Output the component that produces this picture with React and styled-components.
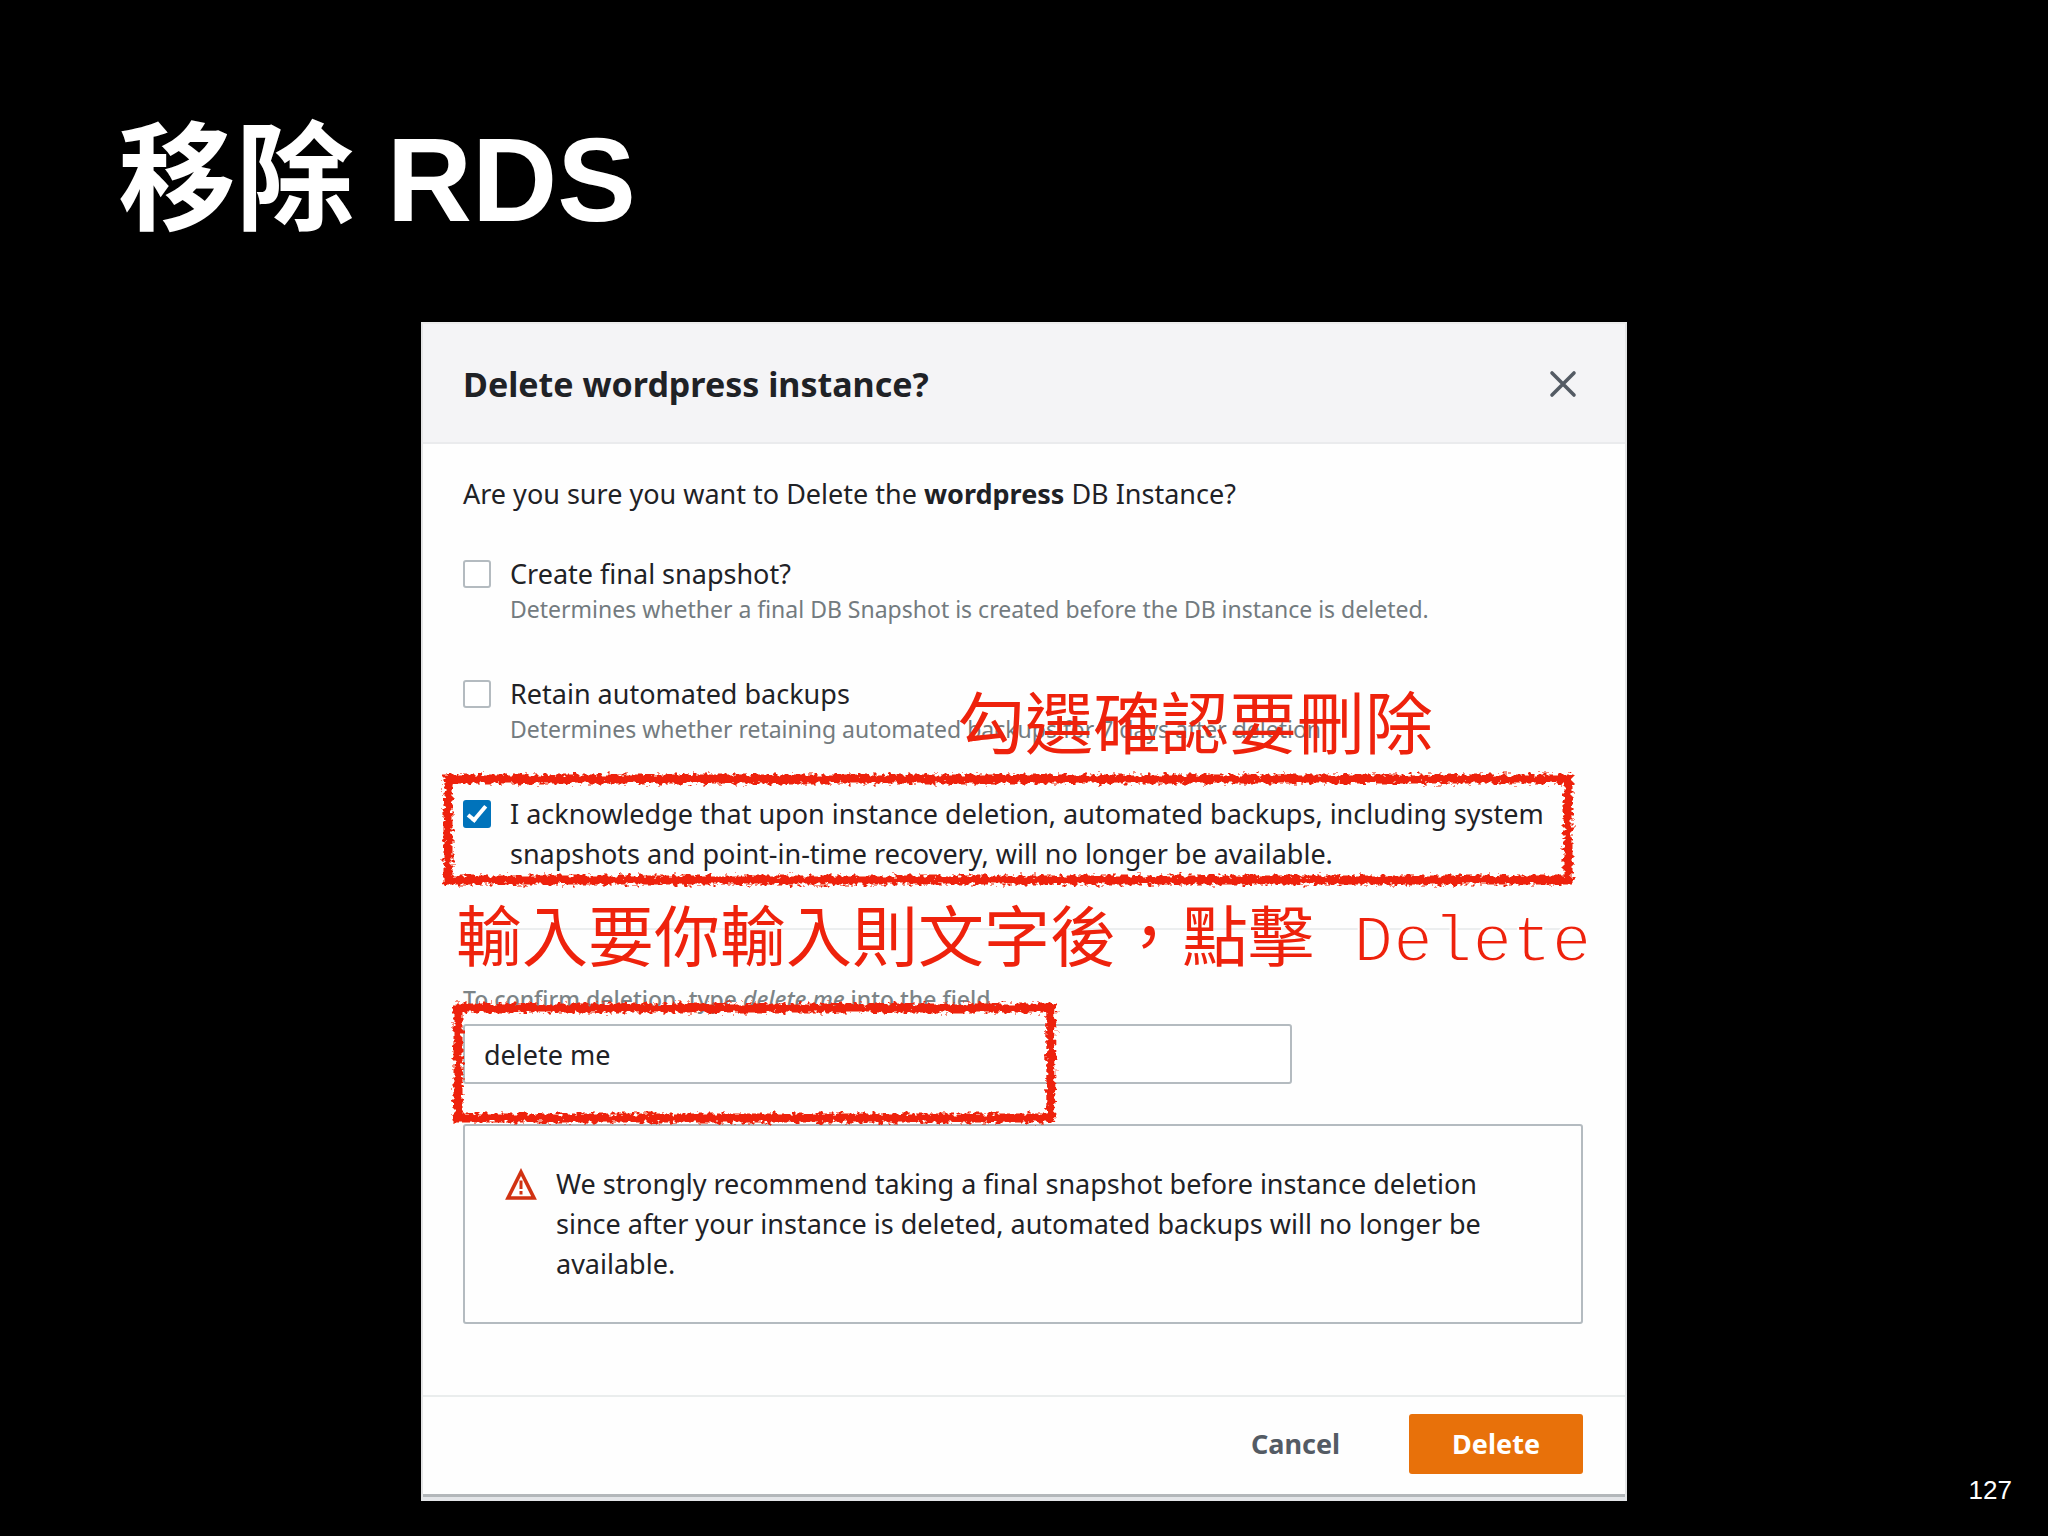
import React, { useId } from "react";
import styled, { createGlobalStyle } from "styled-components";

const GlobalStyle = createGlobalStyle`
  *, *::before, *::after { box-sizing: border-box; }
  body {
    margin: 0;
    background: #000;
    color: #1f2226;
    font-family: "Noto Sans", "Open Sans", "Noto Sans CJK TC", sans-serif;
    font-size: 27px;
    line-height: 40px;
  }
`;

const Slide = styled.main`
  display: flex;
  flex-direction: column;
  gap: 72px;
  min-height: 100vh;
  padding: 110px 0 34px;
  background: #000;
`;

const SlideTitle = styled.h1`
  margin: 0;
  padding: 0 118px;
  color: #fff;
  font-family: "Liberation Sans", "Noto Sans CJK TC", sans-serif;
  font-size: 118px;
  font-weight: 700;
  line-height: 140px;
`;

const Stage = styled.div`
  display: grid;
  grid-template-columns: 1fr minmax(0, 1206px) 1fr;
  flex: 1;
`;

const PageNumber = styled.span`
  grid-column: 3;
  align-self: end;
  justify-self: end;
  padding-right: 36px;
  color: #fff;
  font-family: "Liberation Sans", sans-serif;
  font-size: 26px;
  line-height: 24px;
`;

const Dialog = styled.section`
  grid-column: 2;
  align-self: start;
  border: 2px solid #e4e5e6;
  border-top-color: #ececec;
  border-bottom: 4px solid #e3e5e8;
  background: #fefefe;
`;

const DialogHeader = styled.header`
  display: flex;
  align-items: center;
  justify-content: space-between;
  padding: 40px 42px 38px 40px;
  border-bottom: 2px solid #eaebed;
  background: #f4f4f6;
`;

const DialogTitle = styled.h2`
  margin: 0;
  font-size: 34px;
  font-weight: 700;
  line-height: 40px;
`;

const CloseButton = styled.button`
  display: flex;
  padding: 6px;
  border: 0;
  background: none;
  color: #545b64;
`;

const DialogBody = styled.div`
  padding: 30px 42px 71px 40px;
`;

const Question = styled.p`
  margin: 0 0 40px;
`;

const Option = styled.div`
  position: relative;
  display: grid;
  grid-template-columns: 28px 1fr;
  column-gap: 19px;
  margin-bottom: ${(p) => (p.$last ? 54 : 50)}px;
`;

const Checkbox = styled.input`
  appearance: none;
  display: grid;
  place-items: center;
  width: 28px;
  height: 28px;
  margin: 6px 0;
  border: 2px solid #b4bbc0;
  border-radius: 3px;
  background: #fff;

  &:checked {
    border-color: #0073bb;
    background: #0073bb;
  }

  &:checked::after {
    content: "";
    width: 10px;
    height: 20px;
    margin-bottom: 4px;
    border: solid #fff;
    border-width: 0 4px 4px 0;
    rotate: 40deg;
  }
`;

const OptionLabel = styled.label`
  display: block;
`;

const Hint = styled.p`
  grid-column: 2;
  margin: 0;
  color: #737b7f;
  font-size: 23px;
  line-height: 30px;
`;

const Divider = styled.div`
  position: relative;
  height: 2px;
  margin-bottom: 54px;
  background: #eceeef;
`;

const FieldLabel = styled.label`
  display: block;
  margin-bottom: 10px;
  color: #7c8487;
  font-size: 23px;
  font-weight: 500;
  line-height: 30px;
`;

const Field = styled.div`
  position: relative;
  width: 74%;
  margin-bottom: 40px;
`;

const TextInput = styled.input`
  display: block;
  width: 100%;
  height: 60px;
  padding: 0 19px;
  border: 2px solid #b4bbc0;
  border-radius: 3px;
  background: #fff;
  color: #1f2226;
  font: inherit;
`;

const Warning = styled.div`
  display: flex;
  gap: 19px;
  padding: 38px 90px 38px 40px;
  border: 2px solid #b4bbc0;
  border-radius: 3px;

  p { margin: 0; }
  svg { flex: none; margin-top: 4px; }
`;

const DialogFooter = styled.footer`
  display: flex;
  justify-content: flex-end;
  gap: 26px;
  padding: 17px 42px 20px 40px;
  border-top: 2px solid #eaeded;
  border-bottom: 3px solid #b3b7ba;
`;

const Button = styled.button`
  height: 60px;
  padding: 0 43px;
  border: 0;
  border-radius: 3px;
  background: ${(p) => (p.$primary ? "#e8710a" : "transparent")};
  color: ${(p) => (p.$primary ? "#fff" : "#545b64")};
  font: inherit;
  font-weight: 700;
`;

const Note = styled.div`
  position: absolute;
  z-index: 2;
  top: ${(p) => p.$top}px;
  left: ${(p) => p.$left};
  right: ${(p) => p.$right};
  color: #ee220c;
  font-family: "Noto Sans CJK TC", sans-serif;
  font-size: ${(p) => p.$size}px;
  line-height: 80px;
  white-space: nowrap;
`;

const Mono = styled.span`
  font-family: "Liberation Mono", monospace;
  white-space: pre;
  -webkit-text-stroke: 2px #fefefe;
`;

const SketchFrame = styled.div`
  position: absolute;
  z-index: 1;
  inset: ${(p) => p.$inset};
  pointer-events: none;

  svg {
    display: block;
    width: 100%;
    height: 100%;
    overflow: visible;
  }

  rect {
    width: calc(100% - 10px);
    height: calc(100% - 10px);
    fill: none;
    stroke: #ee220c;
    stroke-width: 9px;
  }
`;

function Sketch({ inset, seed }) {
  const id = useId();
  return (
    <SketchFrame $inset={inset} aria-hidden="true">
      <svg>
        <filter id={id} x="-5%" y="-15%" width="110%" height="130%">
          <feTurbulence type="fractalNoise" baseFrequency="0.2 0.26" numOctaves="2" seed={seed} />
          <feDisplacementMap in="SourceGraphic" scale="10" xChannelSelector="R" yChannelSelector="G" />
        </filter>
        <rect x="5" y="5" filter={`url(#${id})`} />
      </svg>
    </SketchFrame>
  );
}

function CloseIcon() {
  return (
    <svg width="28" height="28" viewBox="0 0 28 28" fill="none" stroke="currentColor" strokeWidth="3.6" strokeLinecap="round">
      <path d="M3 3l22 22M25 3L3 25" />
    </svg>
  );
}

function WarningIcon() {
  return (
    <svg width="32" height="32" viewBox="0 0 32 32" fill="none" stroke="#d13212" strokeWidth="3.6">
      <path d="M16 4L29 30H3z" strokeLinejoin="miter" />
      <path d="M16 12.5v8.5M16 23v3.4" strokeWidth="3" />
    </svg>
  );
}

export default function App() {
  return (
    <>
      <GlobalStyle />
      <Slide>
        <SlideTitle>移除 RDS</SlideTitle>
        <Stage>
          <Dialog role="dialog" aria-labelledby="dialog-title">
            <DialogHeader>
              <DialogTitle id="dialog-title">Delete wordpress instance?</DialogTitle>
              <CloseButton type="button" aria-label="Close">
                <CloseIcon />
              </CloseButton>
            </DialogHeader>
            <DialogBody>
              <Question>
                Are you sure you want to Delete the <strong>wordpress</strong> DB Instance?
              </Question>
              <Option>
                <Checkbox type="checkbox" id="final-snapshot" />
                <OptionLabel htmlFor="final-snapshot">Create final snapshot?</OptionLabel>
                <Hint>Determines whether a final DB Snapshot is created before the DB instance is deleted.</Hint>
              </Option>
              <Option>
                <Checkbox type="checkbox" id="retain-backups" />
                <OptionLabel htmlFor="retain-backups">Retain automated backups</OptionLabel>
                <Hint>Determines whether retaining automated backups for 7 days after deletion</Hint>
                <Note $top={6} $left="auto" $right="150px" $size={68}>勾選確認要刪除</Note>
              </Option>
              <Option $last>
                <Checkbox type="checkbox" id="acknowledge" defaultChecked />
                <OptionLabel htmlFor="acknowledge">
                  I acknowledge that upon instance deletion, automated backups, including system snapshots and
                  point-in-time recovery, will no longer be available.
                </OptionLabel>
                <Sketch inset="-20px 10px -11px -20px" seed={4} />
              </Option>
              <Divider>
                <Note $top={-36} $left="-7px" $right="auto" $size={66}>
                  輸入要你輸入則文字後，點擊<Mono> Delete</Mono>
                </Note>
              </Divider>
              <FieldLabel htmlFor="confirm">
                To confirm deletion, type <em>delete me</em> into the field.
              </FieldLabel>
              <Field>
                <TextInput id="confirm" type="text" defaultValue="delete me" spellCheck={false} />
                <Sketch inset="-21px 236px -39px -10px" seed={9} />
              </Field>
              <Warning>
                <WarningIcon />
                <p>
                  We strongly recommend taking a final snapshot before instance deletion since after your instance is
                  deleted, automated backups will no longer be available.
                </p>
              </Warning>
            </DialogBody>
            <DialogFooter>
              <Button type="button">Cancel</Button>
              <Button type="button" $primary>Delete</Button>
            </DialogFooter>
          </Dialog>
          <PageNumber>127</PageNumber>
        </Stage>
      </Slide>
    </>
  );
}
